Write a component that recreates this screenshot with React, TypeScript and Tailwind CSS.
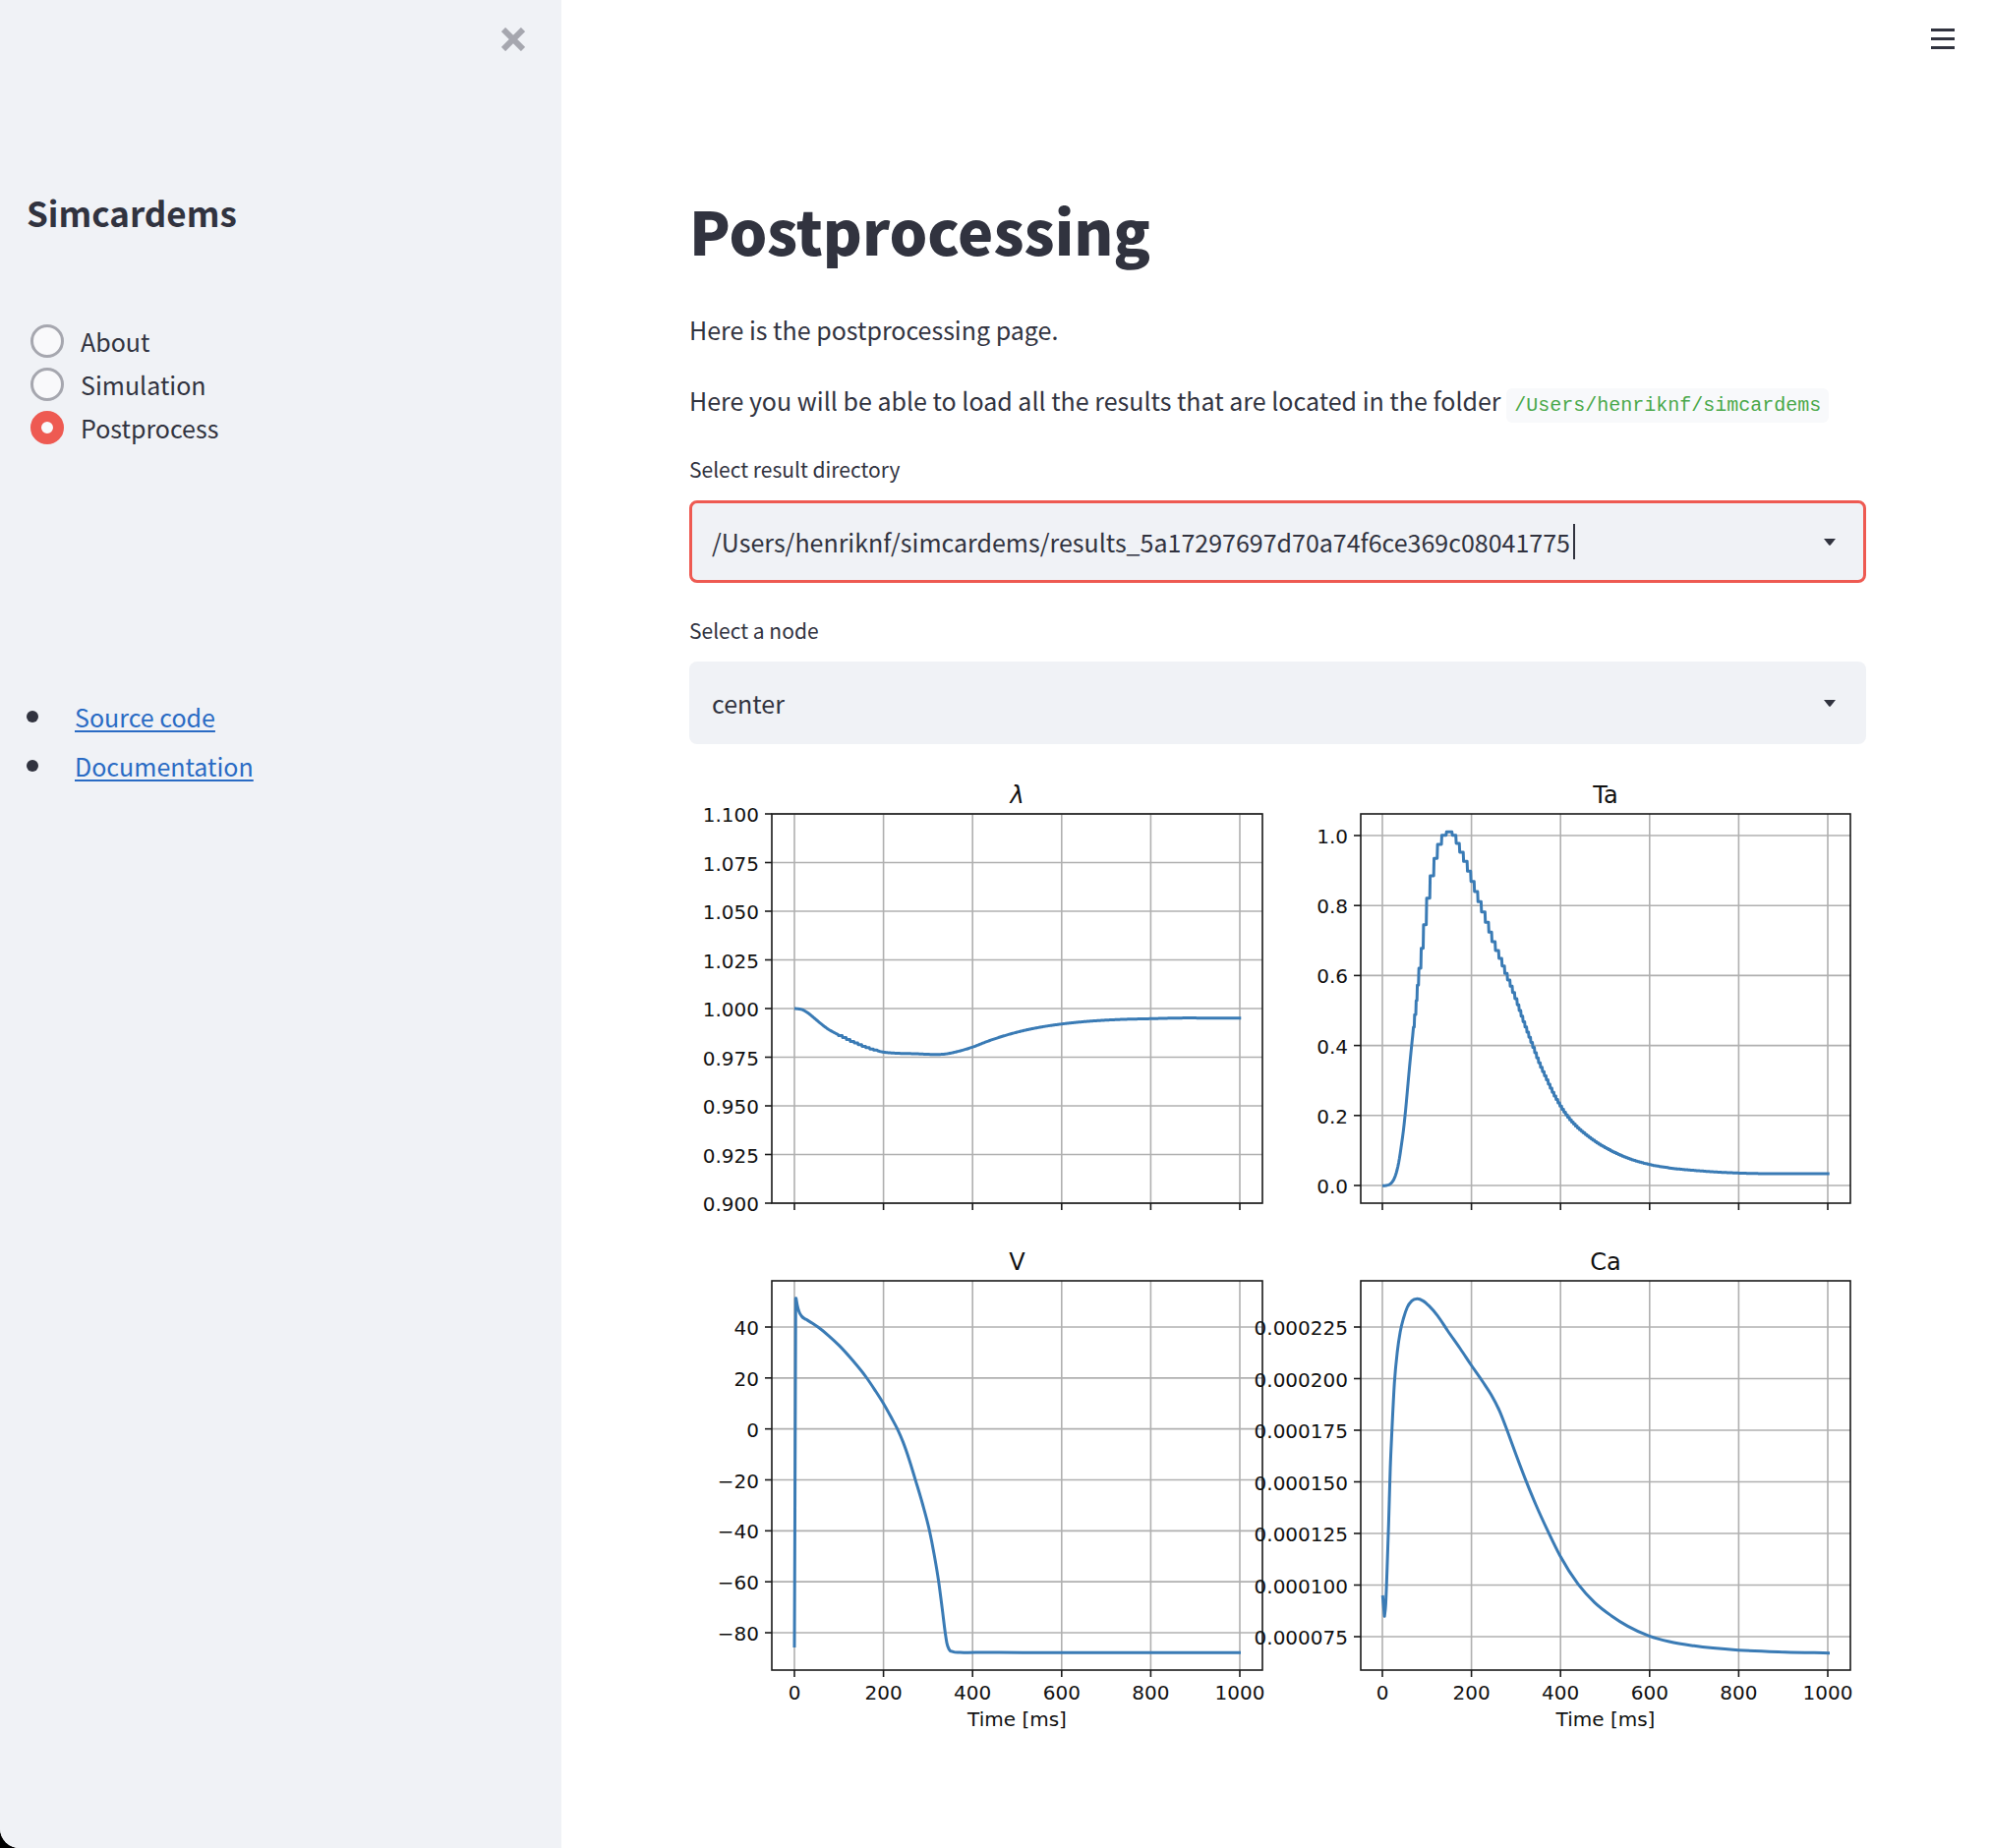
import { useState } from "react";

type Point = [number, number];

/* Traces are digitised on a fine grid; origin and pitch map the grid to figure units. */
type Grid = { x: number; y: number; px: number; py: number };

type Panel = {
  title: string;
  italic?: boolean;
  left: number;
  right: number;
  top: number;
  bottom: number;
  x0: number;
  x1000: number;
  yTicks: { label: string; y: number }[];
  showX: boolean;
  path: string;
};

const toFigure = (pts: Point[], g: Grid): Point[] => pts.map(([x, y]) => [g.x + x / g.px, g.y + y / g.py]);

const fmt = (n: number) => n.toFixed(2);

/* Slope at point i, weighted for uneven spacing of the neighbours. */
function slopeAt(pts: Point[], i: number): number {
  const chord = (a: number, b: number) => (pts[b][1] - pts[a][1]) / (pts[b][0] - pts[a][0]);
  if (i === 0) return chord(0, 1);
  if (i === pts.length - 1) return chord(i - 1, i);
  const before = pts[i][0] - pts[i - 1][0];
  const after = pts[i + 1][0] - pts[i][0];
  return (chord(i - 1, i) * after + chord(i, i + 1) * before) / (before + after);
}

function smooth(pts: Point[]): string {
  let d = `M${fmt(pts[0][0])} ${fmt(pts[0][1])}`;
  for (let i = 0; i < pts.length - 1; i++) {
    const [xa, ya] = pts[i];
    const [xb, yb] = pts[i + 1];
    const h = (xb - xa) / 3;
    d += `C${fmt(xa + h)} ${fmt(ya + slopeAt(pts, i) * h)} ${fmt(xb - h)} ${fmt(yb - slopeAt(pts, i + 1) * h)} ${fmt(xb)} ${fmt(yb)}`;
  }
  return d;
}

const polyline = (pts: Point[]) => "M" + pts.map(([x, y]) => `${fmt(x)} ${fmt(y)}`).join("L");

function valueAt(pts: Point[], x: number): number {
  const i = Math.max(1, pts.findIndex((p) => p[0] >= x));
  const [xa, ya] = pts[i - 1];
  const [xb, yb] = pts[i];
  const h = xb - xa;
  const t = (x - xa) / h;
  const s = 1 - t;
  return (
    ya * (1 + 2 * t) * s * s +
    slopeAt(pts, i - 1) * h * t * s * s +
    yb * t * t * (3 - 2 * t) -
    slopeAt(pts, i) * h * t * t * s
  );
}

/* Holds the value for `width` grid units, then drops to the next level. */
function stairs(pts: Point[], from: number, to: number, width: number): Point[] {
  const out: Point[] = [];
  for (let x = from; x < to; x += width) {
    const end = Math.min(x + width, to);
    const v = valueAt(pts, (x + end) / 2);
    out.push([x + 1, v], [end, v]);
  }
  return out;
}

function sample(pts: Point[], from: number, to: number): Point[] {
  const out: Point[] = [];
  for (let x = from; x <= to; x += 2) out.push([x, valueAt(pts, x)]);
  return out;
}

const topLeft: Grid = { x: 700, y: 780, px: 2.529, py: 3 };
const topRight: Grid = { x: 1300, y: 780, px: 2.529, py: 3 };
const bottomLeft: Grid = { x: 800, y: 1300, px: 3, py: 3 };
const bottomRight: Grid = { x: 1260, y: 1260, px: 2.376, py: 3 };

const lambdaPoints: Point[] = [
  [273, 738], [283, 739], [292, 741], [305, 749], [322, 765], [340, 783], [360, 801], [378, 813], [395, 823],
  [415, 835], [435, 845], [455, 855], [475, 863], [502, 871], [530, 874], [585, 876], [630, 878], [660, 877],
  [690, 870], [733, 855], [770, 838], [805, 824], [860, 806], [910, 794], [962, 785], [1040, 776], [1120, 771],
  [1190, 769], [1260, 767], [1340, 767], [1423, 767],
];
const lambdaTrace: Point[] = [
  ...sample(lambdaPoints, 273, 385),
  ...stairs(lambdaPoints, 386, 486, 10),
  ...sample(lambdaPoints, 488, 1423),
];

const taRise: Point[] = [
  [266, 1279], [278, 1278], [286, 1275], [293, 1268], [300, 1253], [306, 1230], [312, 1195], [317, 1155],
  [322, 1112], [328, 1045], [333, 980], [338, 915], [343, 855], [347, 810],
];
const taLevels: [number, number, number][] = [
  [347, 350, 795], [350, 354, 757], [354, 357, 714], [357, 361, 667], [361, 367, 615], [367, 373, 554],
  [373, 381, 482], [381, 390, 401], [390, 400, 333], [400, 409, 280], [409, 420, 237], [420, 432, 209],
  [432, 447, 199], [447, 457, 209], [457, 466, 234], [466, 476, 261], [476, 486, 289], [486, 495, 319],
  [495, 504, 350], [504, 513, 381], [513, 522, 412], [522, 532, 443], [532, 541, 475], [541, 549, 505],
  [549, 558, 534], [558, 567, 561], [567, 575, 585], [575, 582, 608], [582, 589, 631], [589, 596, 651],
  [596, 602, 670], [602, 608, 689], [608, 614, 708],
];
const taTail: Point[] = [
  [614, 718], [632, 780], [655, 852], [672, 905], [690, 952], [708, 997], [727, 1037], [745, 1068], [765, 1095],
  [790, 1121], [820, 1147], [860, 1174], [905, 1197], [955, 1214], [1010, 1225], [1080, 1233], [1180, 1240],
  [1260, 1242], [1340, 1242], [1418, 1242],
];
const taTrace: Point[] = [
  ...sample(taRise, 268, 346),
  ...taLevels.flatMap(([a, b, v]): Point[] => [[a + 1, v], [b, v]]),
  ...stairs(taTail, 614, 1418, 5),
];

const vRise: Point[] = [[24, 1128], [28, 62]];
const vTrace: Point[] = [
  [29, 62], [33, 85], [38, 103], [46, 117], [60, 127], [78, 138], [97, 151], [130, 178], [160, 206], [200, 250],
  [245, 306], [270, 343], [296, 384], [320, 427], [338, 461], [355, 500], [375, 557], [393, 616], [415, 690],
  [436, 771], [450, 842], [464, 926], [475, 1010], [484, 1082], [489, 1114], [496, 1134], [508, 1141],
  [530, 1143], [600, 1143], [840, 1144], [1100, 1144], [1386, 1144],
];

const caStart: Point[] = [[347.5, 1089], [352, 1153]];
const caTrace: Point[] = [
  [352, 1153], [355, 1115], [358, 1020], [362, 870], [366, 700], [370, 586], [376, 440], [383, 345], [390, 285],
  [398, 243], [407, 210], [418, 190], [431, 184], [445, 190], [460, 206], [480, 235], [505, 282], [535, 336],
  [562, 387], [590, 438], [610, 477], [630, 526], [650, 591], [670, 660], [692, 733], [718, 813], [748, 896],
  [777, 970], [820, 1055], [860, 1111], [900, 1151], [940, 1183], [992, 1213], [1040, 1230], [1100, 1243],
  [1207, 1256], [1320, 1262], [1428, 1265],
];

const ticks = (labels: string[], first: number, last: number) =>
  labels.map((label, i) => ({ label, y: first + ((last - first) * i) / (labels.length - 1) }));

const leftAxis = { left: 785, right: 1284, x0: 808, x1000: 1261 };
const rightAxis = { left: 1384, right: 1882, x0: 1406, x1000: 1859 };

const panels: Panel[] = [
  {
    title: "λ",
    italic: true,
    ...leftAxis,
    top: 828,
    bottom: 1224,
    yTicks: ticks(["1.100", "1.075", "1.050", "1.025", "1.000", "0.975", "0.950", "0.925", "0.900"], 828, 1224),
    showX: false,
    path: polyline(toFigure(lambdaTrace, topLeft)),
  },
  {
    title: "Ta",
    ...rightAxis,
    top: 828,
    bottom: 1224,
    yTicks: ticks(["1.0", "0.8", "0.6", "0.4", "0.2", "0.0"], 850, 1206),
    showX: false,
    path: polyline(toFigure(taTrace, topRight)),
  },
  {
    title: "V",
    ...leftAxis,
    top: 1303,
    bottom: 1699,
    yTicks: ticks(["40", "20", "0", "−20", "−40", "−60", "−80"], 1350, 1661),
    showX: true,
    path: polyline(toFigure(vRise, bottomLeft)) + smooth(toFigure(vTrace, bottomLeft)).replace("M", "L"),
  },
  {
    title: "Ca",
    ...rightAxis,
    top: 1303,
    bottom: 1699,
    yTicks: ticks(["0.000225", "0.000200", "0.000175", "0.000150", "0.000125", "0.000100", "0.000075"], 1350, 1665),
    showX: true,
    path: polyline(toFigure(caStart, bottomRight)) + smooth(toFigure(caTrace, bottomRight)).replace("M", "L"),
  },
];

const xLabels = ["0", "200", "400", "600", "800", "1000"];

function PlotPanel({ p }: { p: Panel }) {
  const xs = xLabels.map((label, i) => ({ label, x: p.x0 + ((p.x1000 - p.x0) * i) / 5 }));
  const mid = (p.left + p.right) / 2;
  return (
    <g>
      <g stroke="#b0b0b0" strokeWidth="1.6">
        {xs.map((t) => (
          <line key={t.label} x1={t.x} x2={t.x} y1={p.top} y2={p.bottom} />
        ))}
        {p.yTicks.map((t) => (
          <line key={t.label} x1={p.left} x2={p.right} y1={t.y} y2={t.y} />
        ))}
      </g>
      <path d={p.path} fill="none" stroke="#3a7bb5" strokeWidth="3" strokeLinejoin="round" />
      <rect
        x={p.left}
        y={p.top}
        width={p.right - p.left}
        height={p.bottom - p.top}
        fill="none"
        stroke="#1a1a1a"
        strokeWidth="1.6"
      />
      <g stroke="#1a1a1a" strokeWidth="1.6">
        {xs.map((t) => (
          <line key={t.label} x1={t.x} x2={t.x} y1={p.bottom} y2={p.bottom + 7} />
        ))}
        {p.yTicks.map((t) => (
          <line key={t.label} x1={p.left - 7} x2={p.left} y1={t.y} y2={t.y} />
        ))}
      </g>
      <g fill="#111111" fontSize="20">
        {p.yTicks.map((t) => (
          <text key={t.label} x={p.left - 13} y={t.y + 8} textAnchor="end">
            {t.label}
          </text>
        ))}
        {p.showX &&
          xs.map((t) => (
            <text key={t.label} x={t.x} y={p.bottom + 30} textAnchor="middle">
              {t.label}
            </text>
          ))}
        {p.showX && (
          <text x={mid} y={p.bottom + 57} textAnchor="middle">
            Time [ms]
          </text>
        )}
        <text x={mid} y={p.top - 11} textAnchor="middle" fontSize="24" fontStyle={p.italic ? "italic" : "normal"}>
          {p.title}
        </text>
      </g>
    </g>
  );
}

function Arrow() {
  return (
    <svg viewBox="0 0 12 7" className="h-[7px] w-3 shrink-0" aria-hidden="true">
      <path d="M0 0H12L6.8 6.4Q6 7.2 5.2 6.4Z" fill="#31333f" />
    </svg>
  );
}

const pages = ["About", "Simulation", "Postprocess"];

export default function App() {
  const [page, setPage] = useState("Postprocess");
  const [directory, setDirectory] = useState("/Users/henriknf/simcardems/results_5a17297697d70a74f6ce369c08041775");

  return (
    <div className="bg-black">
      <div className="flex min-h-screen overflow-hidden rounded-bl-[20px] bg-white font-['Noto_Sans_CJK_SC',sans-serif] text-[25px] leading-10 text-[#31333f]">
        <aside className="flex w-[571px] shrink-0 flex-col bg-[#f0f2f6] pr-7 pl-[27px]">
          <div className="flex h-20 items-center justify-end pr-[9px]">
            <button type="button" aria-label="Close sidebar" className="text-[#a6a7af]">
              <svg viewBox="0 0 24 24" className="size-6" aria-hidden="true">
                <path d="M2 2L22 22M22 2L2 22" stroke="currentColor" strokeWidth="6" fill="none" />
              </svg>
            </button>
          </div>
          <h2 className="mt-[116px] text-[35px] leading-10 font-bold">Simcardems</h2>
          <div role="radiogroup" aria-label="Page" className="mt-[89px] flex flex-col">
            {pages.map((name) => (
              <label key={name} className="flex h-11 items-center gap-[17px] pl-1">
                <input
                  type="radio"
                  name="page"
                  checked={page === name}
                  onChange={() => setPage(name)}
                  className="size-[34px] appearance-none rounded-full border-3 border-[#a6a7af] bg-[#f9f9fb] checked:border-[11px] checked:border-[#ee5a52]"
                />
                {name}
              </label>
            ))}
          </div>
          <ul className="mt-[252px] flex flex-col gap-[10px]">
            {["Source code", "Documentation"].map((name) => (
              <li key={name} className="flex items-center">
                <span className="mr-[37px] size-3 rounded-full bg-[#31333f]" />
                <a href="#" className="text-[#2a6bc4] underline decoration-2 underline-offset-[3px]">
                  {name}
                </a>
              </li>
            ))}
          </ul>
        </aside>

        <main className="flex min-w-0 flex-1 flex-col">
          <header className="flex h-[79px] items-center justify-end pr-9">
            <button type="button" aria-label="Menu" className="flex flex-col gap-[6px]">
              <span className="h-[3px] w-6 bg-[#31333f]" />
              <span className="h-[3px] w-6 bg-[#31333f]" />
              <span className="h-[3px] w-6 bg-[#31333f]" />
            </button>
          </header>
          <div className="flex flex-col pt-[115px] pr-[126px] pb-20 pl-[130px]">
            <h1 className="text-[61px] leading-20 font-black">Postprocessing</h1>
            <p className="mt-[41px]">Here is the postprocessing page.</p>
            <p className="mt-8">
              Here you will be able to load all the results that are located in the folder{" "}
              <code className="rounded-md bg-[#f8f9fb] px-2 py-[6px] font-['Liberation_Mono',monospace] text-[20px] leading-none text-[#4aa84a]">
                /Users/henriknf/simcardems
              </code>
            </p>

            <label htmlFor="directory" className="mt-[34px] text-[21px] leading-8">
              Select result directory
            </label>
            <div className="mt-4 flex h-[84px] items-center rounded-lg border-3 border-[#ee5a52] bg-[#f0f2f6] pr-7 pl-5">
              <input
                id="directory"
                value={directory}
                onChange={(e) => setDirectory(e.target.value)}
                className="min-w-0 bg-transparent caret-transparent outline-none [field-sizing:content]"
              />
              <span className="ml-[3px] h-9 w-[2px] bg-[#31333f]" />
              <span className="flex-1" />
              <Arrow />
            </div>

            <label htmlFor="node" className="mt-8 text-[21px] leading-8">
              Select a node
            </label>
            <div className="relative mt-4 flex">
              <select
                id="node"
                defaultValue="center"
                className="h-[84px] w-full appearance-none rounded-lg border-3 border-transparent bg-[#f0f2f6] pr-16 pl-5 outline-none"
              >
                <option value="center">center</option>
              </select>
              <span className="pointer-events-none absolute inset-y-0 right-[31px] flex items-center">
                <Arrow />
              </span>
            </div>

            <svg
              viewBox="701 780 1197 1000"
              className="mt-[23px] h-auto w-full font-['DejaVu_Sans',sans-serif]"
              role="img"
              aria-label="Traces of λ, Ta, V and Ca over time"
            >
              {panels.map((p) => (
                <PlotPanel key={p.title} p={p} />
              ))}
            </svg>
          </div>
        </main>
      </div>
    </div>
  );
}
